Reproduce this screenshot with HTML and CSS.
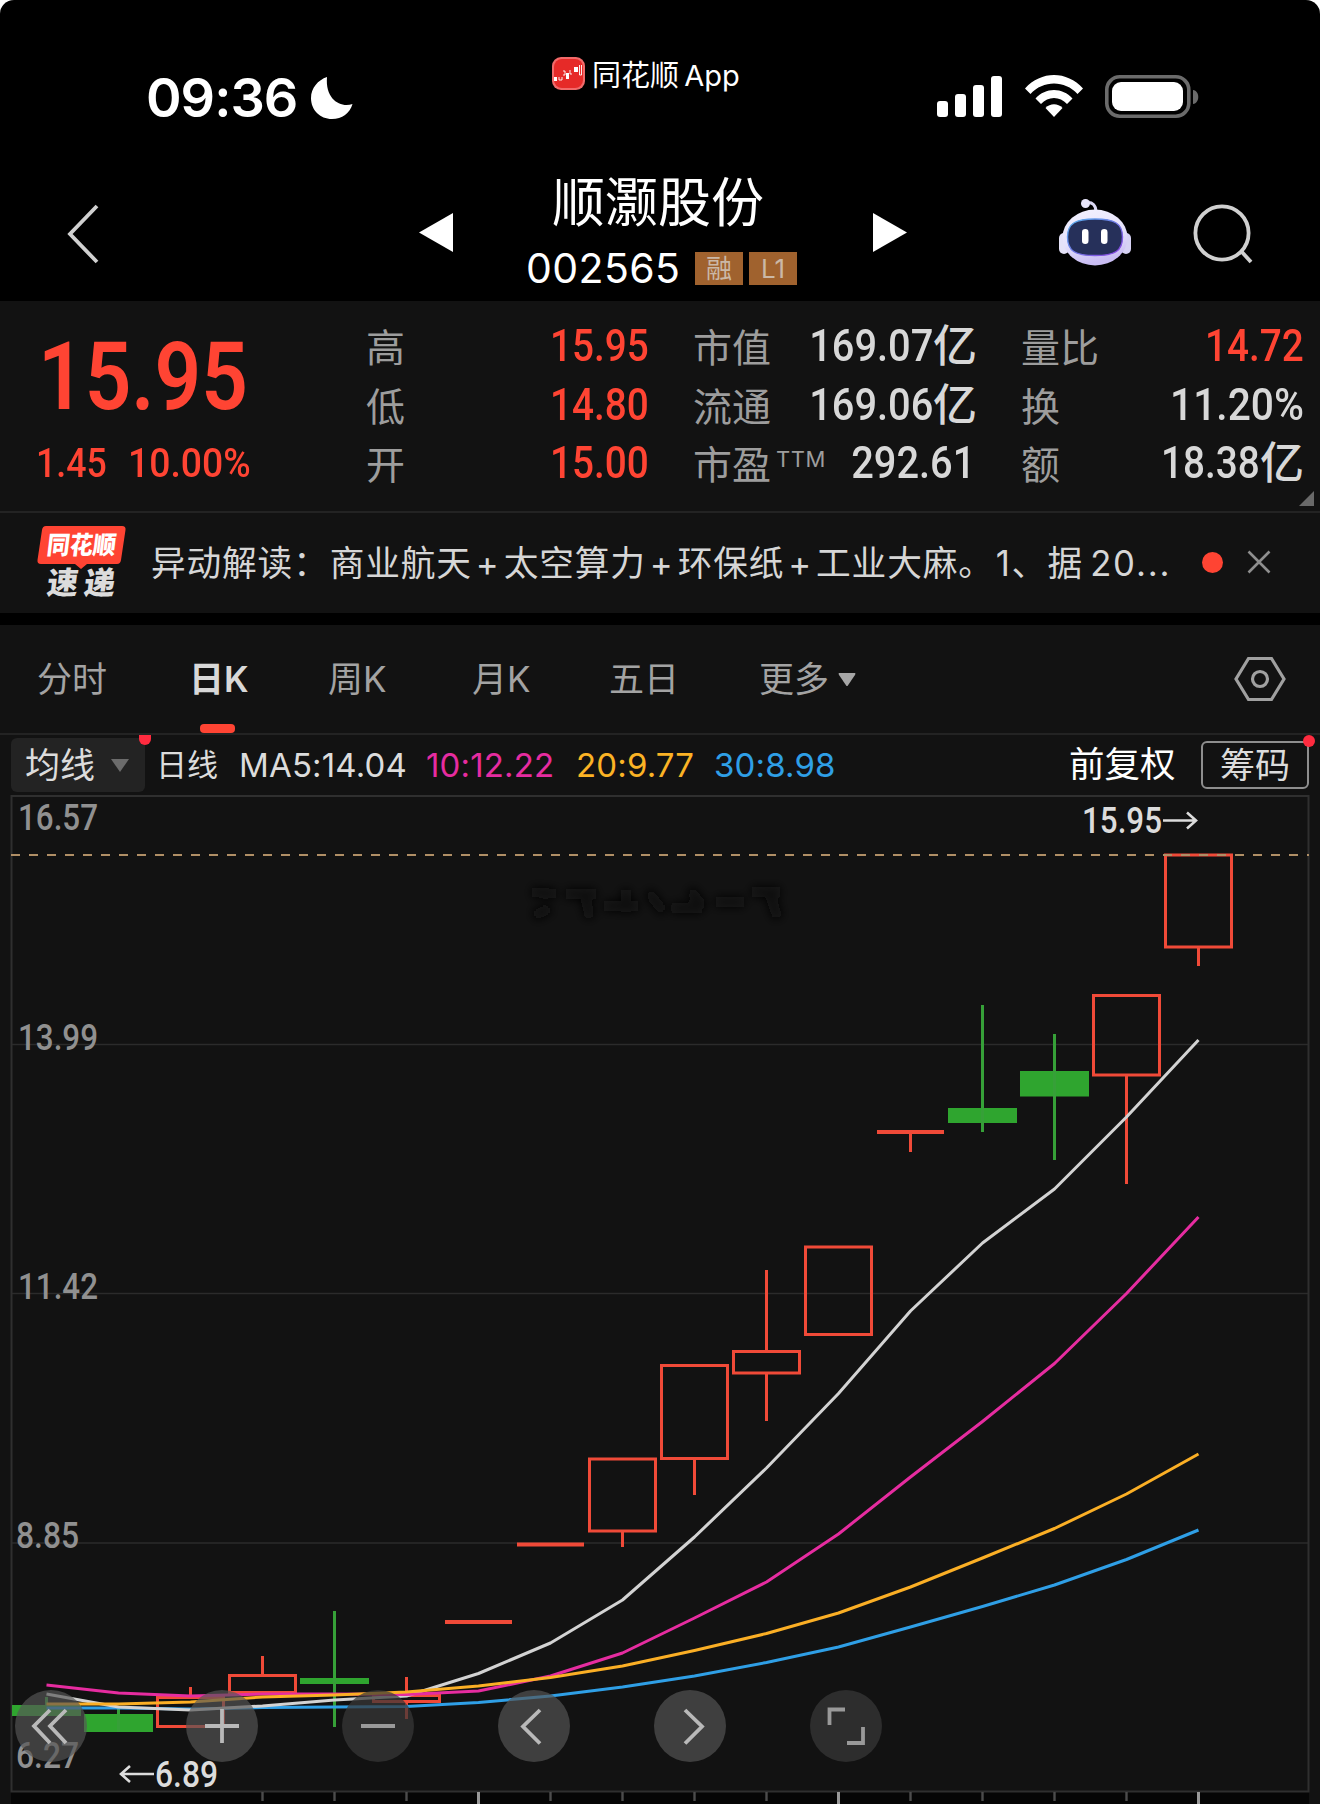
FILE: index.html
```html
<!DOCTYPE html>
<html lang="zh-CN">
<head>
<meta charset="utf-8">
<title>顺灏股份 002565</title>
<link rel="stylesheet" href="styles.css">
</head>
<body>
<div class="phone">
  <header class="status">
    <div class="clock">
      <span class="time">09:36</span>
      <svg class="moon" width="42" height="42" viewBox="0 0 42 42"><path d="M16 0C7 3 0 11 0 21c0 12 9 21 21 21 10 0 18-6 20.500-15C30 31 14 23 16 0z" fill="#fff"/></svg>
    </div>
    <div class="island">
      <svg width="33" height="33" viewBox="0 0 33 33"><rect width="33" height="33" rx="9" fill="#f26a6a"/><rect x="2" y="2" width="29" height="29" rx="8" fill="#e62a28"/><path d="M2 20h3v4H2zM14 16h3v6h-3zM22 10h4v5h-4z" fill="#fff"/><path d="M7 20v3h3v-3M11 14h2v4h-2M18 13v4h2M27.500 8v10h2V8" fill="none" stroke="#fff" stroke-width=".9"/></svg>
      <span>同花顺 App</span>
    </div>
    <div class="signals">
      <svg width="66" height="42" viewBox="0 0 66 42" fill="#fff"><rect y="26" width="11" height="16" rx="3"/><rect x="18" y="19" width="11" height="23" rx="3"/><rect x="36" y="10" width="11" height="32" rx="3"/><rect x="54" y="1" width="11" height="41" rx="3"/></svg>
      <svg width="58" height="42" viewBox="0 0 58 42" fill="#fff"><path d="M0 13.500C16-4.500 42-4.500 58 13.500l-5.500 5.500C40 5 18 5 5.500 19z"/><path d="M10.500 23.500c10-11.500 27-11.500 37 0L42 29c-7-8-19-8-26 0z"/><path d="M20.500 33c4.500-5 12.500-5 17 0L29 42z"/></svg>
      <svg width="94" height="43" viewBox="0 0 94 43"><rect x="1.800" y="1.800" width="82" height="39.400" rx="13" fill="none" stroke="#6b6b6b" stroke-width="3.600"/><rect x="7" y="7" width="71" height="29" rx="9" fill="#fff"/><path d="M88 15c7 1 7 13 0 14z" fill="#6b6b6b"/></svg>
    </div>
  </header>

  <nav class="titlebar">
    <svg class="back" width="34" height="60" viewBox="0 0 34 60"><path d="M31 2L4 30l27 28" fill="none" stroke="#d0d0d0" stroke-width="3.800"/></svg>
    <svg class="prev" width="34" height="39" viewBox="0 0 34 39"><path d="M34 0v39L0 19.500z" fill="#fff"/></svg>
    <div class="stock">
      <h1>顺灏股份</h1>
      <div class="code"><span class="digits">002565</span><span class="badge">融</span><span class="badge">L1</span></div>
    </div>
    <svg class="next" width="34" height="39" viewBox="0 0 34 39"><path d="M0 0v39l34-19.500z" fill="#fff"/></svg>
    <svg class="robot" width="72" height="67" viewBox="0 0 72 67">
      <defs><linearGradient id="shell" x1="0" y1="0" x2=".3" y2="1"><stop offset="0" stop-color="#f4f3ff"/><stop offset=".6" stop-color="#e4e1fb"/><stop offset="1" stop-color="#c9bdf3"/></linearGradient>
      <linearGradient id="rim" x1="0" y1="0" x2="1" y2="1"><stop offset="0" stop-color="#58b4ee"/><stop offset="1" stop-color="#8a3fe0"/></linearGradient></defs>
      <path d="M26 4c8-2 11 3 11 9" fill="none" stroke="#dcd9f5" stroke-width="3"/><circle cx="26.500" cy="4.500" r="4.500" fill="#e9e6fb"/>
      <rect y="34" width="10" height="21" rx="5" fill="#e4e2f8"/><rect x="62" y="34" width="10" height="21" rx="5" fill="#d6d2f4"/>
      <ellipse cx="36" cy="38.500" rx="32.500" ry="28" fill="url(#shell)"/>
      <path d="M36 20c19 0 27.500 4 27.500 18S56 56.500 36 56.500 8.500 52 8.500 38 17 20 36 20z" fill="#26305a" stroke="url(#rim)" stroke-width="1.400"/>
      <rect x="23" y="30" width="6.500" height="15" rx="3.200" fill="#fff"/><rect x="42" y="30" width="6.500" height="15" rx="3.200" fill="#fff"/>
    </svg>
    <svg class="search" width="62" height="62" viewBox="0 0 62 62" fill="none" stroke="#d0d0d0" stroke-width="3.800"><circle cx="29" cy="30" r="26.600"/><path d="M48 48l10 11"/></svg>
  </nav>

  <section class="quote">
    <div class="last">
      <div class="price"><span class="num">15.95</span></div>
      <div class="change"><span class="num">1.45</span><span class="num pct">10.00%</span></div>
    </div>
    <dl class="stats range">
      <div><dt>高</dt><dd class="up"><span class="num">15.95</span></dd></div>
      <div><dt>低</dt><dd class="up"><span class="num">14.80</span></dd></div>
      <div><dt>开</dt><dd class="up"><span class="num">15.00</span></dd></div>
    </dl>
    <dl class="stats value">
      <div><dt>市值</dt><dd><span class="num">169.07</span><i>亿</i></dd></div>
      <div><dt>流通</dt><dd><span class="num">169.06</span><i>亿</i></dd></div>
      <div><dt>市盈<sup>TTM</sup></dt><dd class="plain"><span class="num">292.61</span></dd></div>
    </dl>
    <dl class="stats volume">
      <div><dt>量比</dt><dd class="up"><span class="num">14.72</span></dd></div>
      <div><dt>换</dt><dd><span class="num wide">11.20%</span></dd></div>
      <div><dt>额</dt><dd><span class="num">18.38</span><i>亿</i></dd></div>
    </dl>
    <svg class="expand" width="15" height="15" viewBox="0 0 15 15"><path d="M15 0v15H0z" fill="#696969"/></svg>
  </section>

  <section class="news">
    <svg class="logo" width="90" height="76" viewBox="0 0 90 76">
      <path d="M9 0h76q4 0 3.500 4l-4.500 30q-.6 4-4 4H50l-6 5-6-5H4q-4 0-3.500-4L5 4q.6-4 4-4z" fill="#ff4433"/>
      <g class="logo-text"><text transform="translate(9 28) skewX(-7)" font-size="25" textLength="69" lengthAdjust="spacingAndGlyphs" fill="#fff">同花顺</text>
      <text transform="translate(9 68) skewX(-7)" font-size="31" textLength="68" fill="#dcdcdc">速递</text></g>
    </svg>
    <p>异动解读：<span class="lead"></span>商业航天<b>+</b>太空算力<b>+</b>环保纸<b>+</b>工业大麻。<span class="item">1、</span>据<span class="year">20...</span></p>
    <span class="dot"></span>
    <svg class="close" width="24" height="24" viewBox="0 0 24 24"><path d="M1.500 1.500l21 21m0-21l-21 21" stroke="#8e8e8e" stroke-width="2.600"/></svg>
  </section>

  <nav class="tabs">
    <span class="tab">分时</span>
    <span class="tab active">日K</span>
    <span class="tab">周K</span>
    <span class="tab">月K</span>
    <span class="tab">五日</span>
    <span class="tab more">更多<svg width="18" height="13" viewBox="0 0 18 13"><path d="M1 0h16q1 .5 0 2L9.500 13h-1L1 2Q0 .5 1 0z" fill="#a6a6a6"/></svg></span>
    <svg class="settings" width="52" height="46" viewBox="0 0 52 46" fill="none" stroke="#a0a0a0" stroke-width="3.200"><path d="M14.500 2.500h23L50 23 37.500 43.500h-23L2 23z"/><circle cx="26" cy="23" r="7.500"/></svg>
  </nav>

  <section class="legend">
    <div class="select">均线<svg width="18" height="13" viewBox="0 0 18 13"><path d="M0 0h18L9 13z" fill="#6b6b6b"/></svg><b class="pin cut"></b></div>
    <span class="period">日线</span>
    <span class="ma ma5">MA5:14.04</span>
    <span class="ma ma10">10:12.22</span>
    <span class="ma ma20">20:9.77</span>
    <span class="ma ma30">30:8.98</span>
    <span class="adjust">前复权</span>
    <div class="chips">筹码<b class="pin"></b></div>
  </section>

  <section class="chart">
    <svg width="1320" height="1009" viewBox="0 795 1320 1009">
      <defs><filter id="smudge" x="-10%" y="-50%" width="120%" height="200%"><feGaussianBlur stdDeviation="5"/></filter></defs>
      <rect x="11" y="1792" width="1298" height="12" fill="#060606"/>
      <path class="smudge" filter="url(#smudge)" d="M532 892l24 2M534 916l16-8M566 894h30M584 892l6 26M604 906h34M626 890v22M648 892l16 20M672 908h30M690 890l14 18M716 902h28M752 892h28M768 890l10 28"/>
      <g class="grid"><path d="M12 1044.500h1297M12 1293.500h1297M12 1543h1297"/></g>
      <path class="frame" d="M11.500 1791.500V796H1308.500V1791.500z"/>
      <g class="axis">
        <text x="18" y="830" textLength="80" lengthAdjust="spacingAndGlyphs">16.57</text>
        <text x="18" y="1050" textLength="80" lengthAdjust="spacingAndGlyphs">13.99</text>
        <text x="18" y="1299" textLength="80" lengthAdjust="spacingAndGlyphs">11.42</text>
        <text x="16" y="1548" textLength="63" lengthAdjust="spacingAndGlyphs">8.85</text>
        <text x="16" y="1768" textLength="63" lengthAdjust="spacingAndGlyphs">6.27</text>
      </g>
      <g class="rise">
        <path d="M157.500 1697.500h66v29h-66zM190.500 1687v10M229.500 1675.500h66v17h-66zM262.500 1656v19M373.500 1695.500h66v6h-66zM406.500 1677v18M406.500 1702v17"/>
        <path d="M589.500 1459h66v72h-66zM622.500 1532v15M661.500 1365.500h66v93h-66zM694.500 1459v36M733.500 1351.500h66v21.500h-66zM766.500 1270v81M766.500 1373v48M805.500 1247h66v87.500h-66z"/>
        <path d="M910.500 1133v19M1093.500 995.500h66v79.500h-66zM1126.500 1075v109M1165.500 855h66v92h-66zM1198.500 947v19"/>
        <path class="flat" d="M445 1622h67M517 1544.500h67M877 1132h67"/>
      </g>
      <g class="fall">
        <path d="M12 1705h69v11h-69zM84 1714h69v18h-69zM300 1678h69v6h-69zM948 1108h69v15h-69zM1020 1071h69v25.500h-69z"/>
        <path class="wick" d="M46.500 1697v10M118.500 1707v25M334.500 1611v116M982.500 1005v127M1054.500 1034v126"/>
      </g>
      <path d="M11 855H1309" stroke="#b08f66" stroke-width="1.800" stroke-dasharray="9 9"/>
      <g class="lines">
        <polyline stroke="#2f9fe6" points="46.500,1708 118.500,1708 190.500,1709 262.500,1707.500 334.500,1707 406.500,1706.500 478.500,1702.500 550.500,1696 622.500,1687 694.500,1676 766.500,1662.500 838.500,1647 910.500,1627 982.500,1606.500 1054.500,1585 1126.500,1559.500 1198.500,1530"/>
        <polyline stroke="#d3d3d3" points="46.500,1694 118.500,1707 190.500,1710 262.500,1706 334.500,1700 406.500,1696 478.500,1673.500 550.500,1643 622.500,1600 694.500,1537 766.500,1468 838.500,1393.500 910.500,1311 982.500,1243 1054.500,1189 1126.500,1117 1198.500,1040"/>
        <polyline stroke="#e62ca0" points="46.500,1685 118.500,1693 190.500,1696 262.500,1694 334.500,1694 406.500,1694.500 478.500,1691 550.500,1676 622.500,1653 694.500,1618 766.500,1582 838.500,1534 910.500,1477 982.500,1421.500 1054.500,1363.500 1126.500,1293.500 1198.500,1217"/>
        <polyline stroke="#fbaf25" points="46.500,1704 118.500,1704 190.500,1702 262.500,1697 334.500,1695 406.500,1692 478.500,1686 550.500,1677.500 622.500,1666 694.500,1650.500 766.500,1633.500 838.500,1613 910.500,1587 982.500,1558 1054.500,1528.500 1126.500,1494 1198.500,1454"/>
      </g>
      <g class="mark">
        <text x="1082" y="833" textLength="80" lengthAdjust="spacingAndGlyphs">15.95</text><path d="M1163 820.500h33m-9-8l9 8-9 8"/>
        <text x="155" y="1787" textLength="63" lengthAdjust="spacingAndGlyphs">6.89</text><path d="M154 1774h-33m9-8l-9 8 9 8"/>
      </g>
      <path class="minor" d="M262.500 1792v9M334.500 1792v9M406.500 1792v9M550.500 1792v9M622.500 1792v9M694.500 1792v9M766.500 1792v9M910.500 1792v9M982.500 1792v9M1054.500 1792v9M1126.500 1792v9"/>
      <path class="major" d="M478.500 1792v12M838.500 1792v12M1198.500 1792v12"/>
    </svg>
    <div class="controls">
      <button><svg viewBox="0 0 72 72"><path d="M35 20L19 36l16 17M51 20L35 36l16 17"/></svg></button>
      <button><svg viewBox="0 0 72 72"><path d="M19 36h34M36 19v34"/></svg></button>
      <button class="dim"><svg viewBox="0 0 72 72"><path d="M19 36h34"/></svg></button>
      <button><svg viewBox="0 0 72 72"><path d="M42 20L25 36.500l17 17"/></svg></button>
      <button><svg viewBox="0 0 72 72"><path d="M31 20l17 16.500-17 17"/></svg></button>
      <button class="dim"><svg viewBox="0 0 72 72"><path d="M19.500 35V19.500H35M53 37v16H37"/></svg></button>
    </div>
  </section>
</div>
</body>
</html>
```
FILE: styles.css
```css
* { box-sizing: border-box; }
body { margin: 0; background: #fff; font-family: Inter, "Noto Sans CJK SC", sans-serif; }
svg { display: block; flex: none; }
.phone { width: 1320px; height: 1804px; background: #000; border-radius: 14px 14px 0 0; overflow: hidden; color: #fff; white-space: nowrap; }

.status { height: 160px; display: flex; align-items: flex-start; }
.clock { width: 552px; padding: 75px 0 0 146px; display: flex; align-items: center; gap: 14px; }
.time { font-size: 54px; line-height: 46px; font-weight: 600; width: 151px; letter-spacing: -1px; }
.island { width: 385px; padding-top: 57px; display: flex; gap: 7px; font-size: 29px; line-height: 38px; word-spacing: -3px; }
.signals { padding-top: 75px; display: flex; gap: 22px; }

.titlebar { height: 141px; padding-left: 66px; display: flex; align-items: flex-start; }
.back { margin-top: 44px; }
.prev { margin: 53px 0 0 319px; }
.stock { width: 420px; padding-top: 13px; }
.stock h1 { margin: 0; font-size: 53px; line-height: 60px; font-weight: 400; padding-left: 99px; }
.code { display: flex; padding: 15px 0 0 73px; align-items: center; gap: 6px; text-align: center; }
.digits { font-size: 41px; line-height: 40px; width: 163px; letter-spacing: .4px; text-align: left; }
.badge { width: 48px; height: 33px; background: #a0622e; color: #cbb8a6; font-size: 26px; line-height: 33px; }
.next { margin-top: 53px; }
.robot { margin: 39px 0 0 152px; }
.search { margin: 43px 0 0 62px; }

.quote { height: 212px; background: #121212; border-bottom: 2px solid #232323; display: flex; position: relative; padding-top: 17px; }
.num { font-family: Roboto, sans-serif; font-weight: 500; display: inline-block; transform: scaleX(.86); transform-origin: 100% 50%; }
.num.wide { transform: scaleX(.905); }
.last { width: 366px; color: #ff4433; }
.price { height: 114px; padding-left: 38px; font-size: 95px; line-height: 113px; }
.price .num { transform-origin: 0 50%; font-weight: 600; }
.change { padding-left: 36px; display: flex; font-size: 41px; line-height: 62px; }
.change .num { transform-origin: 0 50%; width: 92px; font-weight: 500; transform: scaleX(.87); }
.change .pct { transform: scaleX(.91); }
.stats { margin: 0; font-size: 45px; color: #d8d8d8; }
.stats div { height: 58.700px; display: flex; justify-content: space-between; line-height: 60px; }
.stats dt { color: #9d9d9d; font-size: 39px; }
.stats sup { font-size: 22px; line-height: 20px; vertical-align: 12px; margin-left: 5px; letter-spacing: .5px; }
.stats dd { margin: -2px 0 0; display: flex; }
.stats i { font-style: normal; font-size: 44px; font-weight: 500; }
.stats .up { color: #ff4433; }
.range { width: 283px; }
.value { width: 284px; margin-left: 44px; }
.value .num { transform: scaleX(.885); }
.value .plain { padding-right: 2px; }
.volume { width: 283px; margin-left: 44px; }
.expand { position: absolute; right: 6px; bottom: 5px; }

.news { height: 100px; background: #121212; display: flex; align-items: flex-start; padding: 13px 0 0 37px; }
.logo { overflow: visible; }
.logo-text { font-family: "Noto Sans CJK SC", sans-serif; font-weight: 900; }
.news p { margin: 13px 0 0 24px; width: 1051px; font-size: 34.700px; line-height: 48px; color: #d6d6d6; letter-spacing: .85px; }
.news b { font-weight: 400; margin: 0 4px 0 4px; }
.item { margin-left: 2px; letter-spacing: 1.500px; }
.lead { margin-left: 1px; }
.year { margin-left: 7px; letter-spacing: 1.800px; }
.dot { width: 21px; height: 21px; border-radius: 50%; background: #ff4433; margin-top: 26px; }
.close { margin: 24px 0 0 24px; }

.tabs { margin-top: 12px; height: 110px; background: #121212; border-bottom: 2px solid #232323; display: flex; padding-left: 37px; font-size: 35px; line-height: 108px; color: #a3a3a3; }
.tab { width: 137px; }
.tab.active { width: 154px; padding-left: 15px; color: #d8d8d8; font-weight: 600; position: relative; }
.tab.active::after { content: ""; position: absolute; left: 26px; bottom: 0; width: 35px; height: 9px; border-radius: 4px; background: #ff4433; }
.tab:nth-child(3) { width: 144px; }
.tab.more { width: 488px; padding-left: 13px; display: flex; align-items: center; gap: 9px; }
.settings { margin-top: 31px; }

.legend { height: 60px; background: #121212; display: flex; align-items: center; padding-left: 11px; font-size: 33px; line-height: 60px; }
.select { width: 134px; height: 54px; background: #232323; border-radius: 6px; padding-left: 14px; display: flex; align-items: center; gap: 16px; font-size: 35px; color: #dcdcdc; position: relative; }
.pin { position: absolute; width: 12px; height: 12px; border-radius: 50%; background: #ff2b3f; right: -6px; top: -6px; }
.pin.cut { top: -3px; height: 10px; border-radius: 0 0 6px 6px; }
.period { margin-left: 11px; width: 83px; font-size: 31px; color: #dcdcdc; }
.ma { font-size: 33px; letter-spacing: .15px; }
.ma5 { width: 187px; color: #dcdcdc; }
.ma10 { width: 150px; color: #e62ca0; }
.ma20 { width: 138px; color: #fbb325; }
.ma30 { width: 355px; color: #2f9fe6; }
.adjust { width: 132px; font-size: 35.500px; }
.chips { width: 108px; height: 48px; border: 2px solid #8e8e8e; border-radius: 6px; font-size: 35px; line-height: 44px; text-align: center; color: #dcdcdc; position: relative; }
.chips .pin { right: -8px; top: -8px; }

.chart { background: #121212; height: 1009px; position: relative; }
.chart text { font-family: Roboto, sans-serif; font-size: 36px; font-weight: 500; }
.smudge { fill: none; stroke: #0b0b0b; stroke-width: 10; }
.grid { stroke: #2b2b2b; stroke-width: 1.500; }
.frame { fill: none; stroke: #2f2f2f; stroke-width: 2; }
.axis { fill: #909090; }
.rise { fill: none; stroke: #f04a38; stroke-width: 3; }
.flat { stroke-width: 4; }
.fall { fill: #2fa52f; }
.wick { stroke: #36a038; stroke-width: 3; }
.lines { fill: none; stroke-width: 3; stroke-linejoin: round; }
.mark { fill: #dcdcdc; }
.mark path { fill: none; stroke: #dcdcdc; stroke-width: 2.600; }
.minor { stroke: #4c4c4c; stroke-width: 2.400; }
.major { stroke: #999; stroke-width: 3; }
.controls { position: absolute; left: 15px; top: 895px; display: flex; gap: 84px; }
.controls button { width: 72px; height: 72px; padding: 0; border: 0; border-radius: 50%; background: rgba(86, 86, 86, .68); }
.controls button:first-child { margin-right: 15px; }
.controls .dim { background: rgba(56, 56, 56, .72); }
.controls path { fill: none; stroke: #b9b9b9; stroke-width: 3.800; }
.controls .dim path { stroke: #999; }
```
